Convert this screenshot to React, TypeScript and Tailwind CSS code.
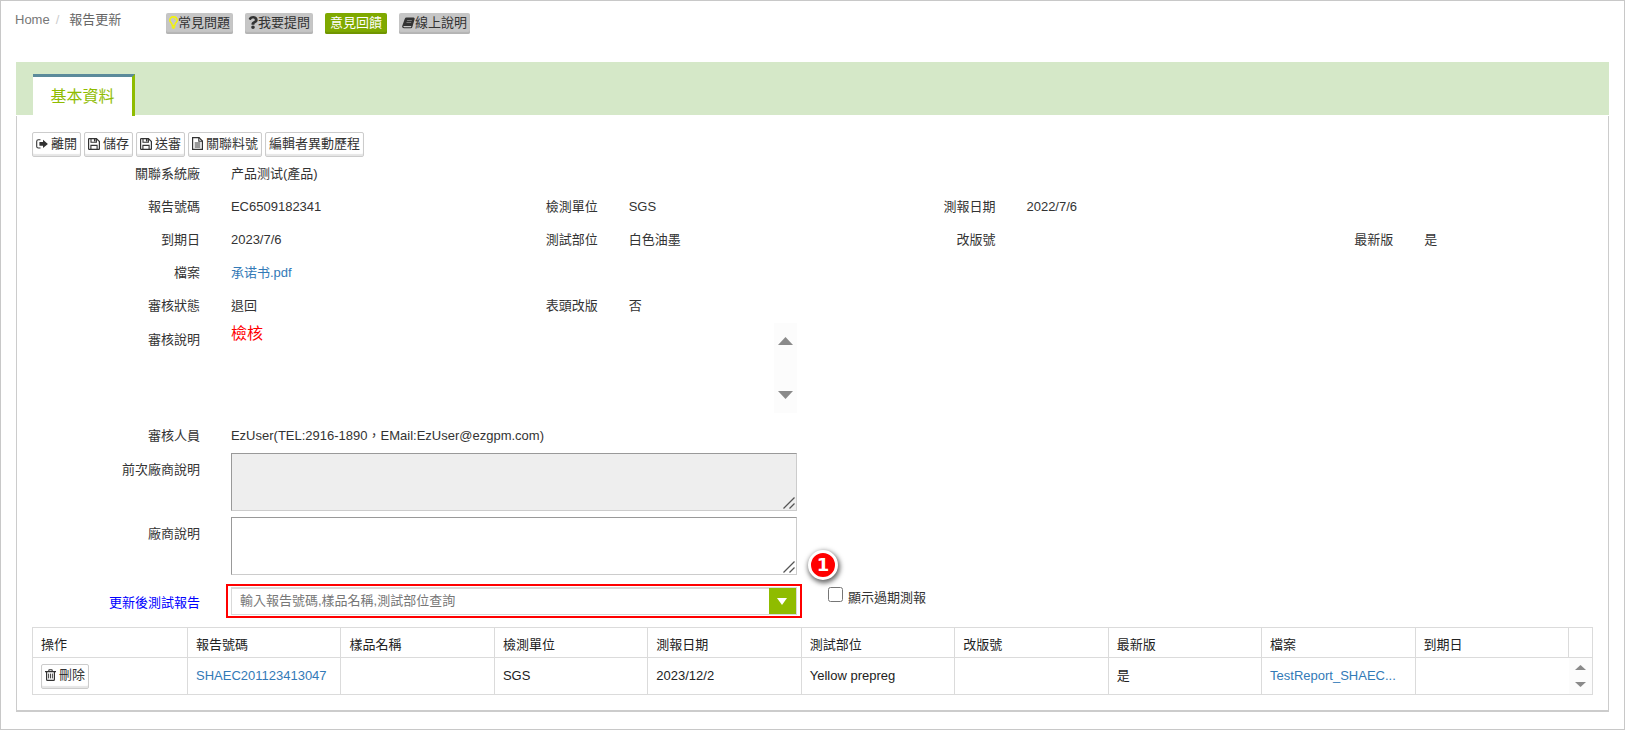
import type { ReactNode } from "react";
import { FaQuestion } from "react-icons/fa";

type FieldProps = {
  label: string;
  htmlFor?: string;
  className?: string;
  children?: ReactNode;
};

const columns = [
  "操作",
  "報告號碼",
  "樣品名稱",
  "檢測單位",
  "測報日期",
  "測試部位",
  "改版號",
  "最新版",
  "檔案",
  "到期日",
];

const helpButton =
  "flex h-[21px] items-center rounded-xs bg-[#c6c6c6] px-[3px] pb-[2px] text-[#333] shadow-[inset_0_-2px_1px_#b4b4b4]";

const toolButton =
  "flex h-[25px] items-center gap-[3px] rounded-xs border border-[#ccc] bg-white px-[3px] pb-[2px] text-[#333] shadow-[inset_0_-2px_1px_#e6e6e6]";

function SignOutIcon() {
  return (
    <svg width="12" height="12" viewBox="0 0 12 12" fill="none" aria-hidden="true">
      <path d="M4.5 1.8H2.4Q.7 1.8.7 3.4V8.4Q.7 10 2.4 10H4.5" stroke="currentColor" strokeWidth="1.1" />
      <path d="M3.4 4.100H7V1.700L11.900 5.900L7 10.100V7.700H3.400Z" fill="currentColor" />
    </svg>
  );
}

function SaveIcon() {
  return (
    <svg width="12" height="12" viewBox="0 0 12 12" fill="none" stroke="currentColor" aria-hidden="true">
      <path d="M.6 1.200Q.6.600 1.200.600H8.400L11.400 3.600V10.800Q11.400 11.400 10.800 11.400H1.200Q.6 11.400.6 10.800Z" strokeWidth="1.200" />
      <path d="M3 .6V4.300H8.400V.6M2.900 11.400V7.400H9.100V11.400" strokeWidth="1.100" />
      <path d="M6.700 1V3.500" strokeWidth="1.500" />
    </svg>
  );
}

function FileIcon() {
  return (
    <svg width="11" height="13" viewBox="0 0 11 13" fill="none" stroke="currentColor" aria-hidden="true">
      <path d="M.6.6H7L10.400 4V12.400H.6Z" strokeWidth="1.200" />
      <path d="M6.800.6V4.200H10.400" strokeWidth="1.100" />
      <path d="M2.700 6H8.300M2.700 8H8.300M2.700 10H8.300" />
    </svg>
  );
}

function TrashIcon() {
  return (
    <svg width="11" height="12" viewBox="0 0 11 12" fill="none" stroke="currentColor" aria-hidden="true">
      <path d="M0 2.600H11M3.600 2.400L4.100.700H6.900L7.400 2.400" strokeWidth="1.100" />
      <path d="M1.600 2.800V10.400Q1.600 11.400 2.500 11.400H8.500Q9.400 11.400 9.400 10.400V2.800" strokeWidth="1.200" />
      <path d="M3.600 4.600V9.400M5.500 4.600V9.400M7.400 4.600V9.400" strokeWidth=".9" />
    </svg>
  );
}

function BulbIcon() {
  return (
    <svg width="9" height="13" viewBox="0 0 9 13" fill="none" stroke="#f5f500" aria-hidden="true">
      <path d="M3 8.700Q3 7.500 1.800 6.400Q.8 5.500.8 4.200Q1 1 4.500.800Q8 1 8.200 4.200Q8.200 5.500 7.200 6.400Q6 7.500 6 8.700" strokeWidth="1.500" />
      <path d="M4.700 2.600Q6.200 2.800 6.200 4.200" strokeWidth=".8" />
      <path d="M2.600 9.400H6.400M2.600 10.900H6.400M3.500 12.200H5.500" strokeWidth="1.300" />
    </svg>
  );
}

function BookIcon() {
  return (
    <svg width="13" height="12" viewBox="0 0 13 12" aria-hidden="true">
      <path
        fillRule="evenodd"
        d="M4.500.600H11.600Q13 .900 12.600 2.200L10.400 9.800Q10 11.300 8.700 11.300H1.900Q-.2 11 .2 9L2.700 2Q3.200.600 4.500.600ZM5.200 3L5 3.600H9.700L9.900 3ZM4.600 4.900L4.400 5.500H9.100L9.300 4.900ZM1.500 9Q1.200 10.200 2.200 10.200H8.900L9.400 9Z"
        fill="currentColor"
      />
    </svg>
  );
}

function Triangle({ down = false, className = "" }: { down?: boolean; className?: string }) {
  return (
    <svg
      viewBox="0 0 16 8"
      preserveAspectRatio="none"
      className={className}
      fill="currentColor"
      aria-hidden="true"
    >
      <path d={down ? "M0 0H16L8 8Z" : "M0 8H16L8 0Z"} />
    </svg>
  );
}

function Field({ label, className = "", children }: FieldProps) {
  return (
    <div className={`flex ${className}`}>
      <span className="w-[46%] shrink-0 text-right">{label}</span>
      <div className="ml-[31px] min-w-0">{children}</div>
    </div>
  );
}

// Rows whose control runs across a good third of the panel
function WideField({ label, htmlFor, className = "", children }: FieldProps) {
  return (
    <div className={`flex ${className}`}>
      {htmlFor ? (
        <label htmlFor={htmlFor} className="w-[11.5%] shrink-0 pt-2 text-right">
          {label}
        </label>
      ) : (
        <span className="w-[11.5%] shrink-0 pt-2 text-right">{label}</span>
      )}
      <div className="ml-[31px] w-[566px]">{children}</div>
    </div>
  );
}

function NoteArea({ id, readOnly = false }: { id: string; readOnly?: boolean }) {
  return (
    <div className="relative">
      <textarea
        id={id}
        readOnly={readOnly}
        className="block h-[58px] w-full resize-none border border-t-[#999] border-r-[#ccc] border-b-[#ccc] border-l-[#999] bg-white p-1 read-only:bg-[#eee]"
      />
      <svg
        className="pointer-events-none absolute right-[2px] bottom-[2px]"
        width="12"
        height="12"
        viewBox="0 0 12 12"
        stroke="#555"
        strokeWidth="1.300"
        aria-hidden="true"
      >
        <path d="M.5 11.500L11.500.5M6.500 11.500L11.500 6.500" />
      </svg>
    </div>
  );
}

function Header() {
  return (
    <header className="flex items-start pt-[10px]">
      <nav className="flex w-[151px] text-[#666]">
        <a href="#" className="text-[#777]">
          Home
        </a>
        <span className="px-[6px] text-[#ccc]">/</span>
        <span className="pl-1">報告更新</span>
      </nav>
      <div className="flex gap-3 pt-[2px]">
        <button type="button" className={helpButton}>
          <BulbIcon />
          常見問題
        </button>
        <button type="button" className={helpButton}>
          <FaQuestion className="w-[10px]" />
          我要提問
        </button>
        <button
          type="button"
          className="flex h-[21px] items-center rounded-xs bg-[#7fa900] px-[5px] pb-[2px] text-white shadow-[inset_0_-2px_1px_#6f9400]"
        >
          意見回饋
        </button>
        <button type="button" className={helpButton}>
          <BookIcon />
          線上說明
        </button>
      </div>
    </header>
  );
}

function ReportTable() {
  return (
    <table className="mt-[9px] w-full table-fixed border-collapse border border-[#dbdbdb] text-left text-[#222]">
      <thead>
        <tr className="h-[30px]">
          {columns.map((column) => (
            <th
              key={column}
              className="border border-[#dbdbdb] px-2 pt-1 font-normal first:w-[155px]"
            >
              {column}
            </th>
          ))}
          <th className="w-6" aria-label="捲軸" />
        </tr>
      </thead>
      <tbody>
        <tr className="h-[37px] [&>td]:border [&>td]:border-[#dbdbdb] [&>td]:px-2">
          <td>
            <button type="button" className={toolButton}>
              <TrashIcon />
              刪除
            </button>
          </td>
          <td>
            <a href="#" className="text-[#337ab7]">
              SHAEC201123413047
            </a>
          </td>
          <td />
          <td>SGS</td>
          <td>2023/12/2</td>
          <td>Yellow prepreg</td>
          <td />
          <td>是</td>
          <td>
            <a href="#" className="text-[#337ab7]">
              TestReport_SHAEC...
            </a>
          </td>
          <td className="border-r-0!" />
          <td className="border-l-0! bg-[#fcfcfc] px-0!">
            <div className="flex flex-col items-center gap-3 text-[#8a8a8a]">
              <Triangle className="h-[5px] w-[11px]" />
              <Triangle down className="h-[5px] w-[11px]" />
            </div>
          </td>
        </tr>
      </tbody>
    </table>
  );
}

export default function App() {
  return (
    <div className="min-h-screen border border-[#c8c8c8] bg-white px-[15px] pb-[14px] font-['Liberation_Sans','Noto_Sans_CJK_TC',sans-serif] text-[13px] leading-[18px] text-[#333]">
      <div className="-ml-px h-[61px]">
        <Header />
      </div>

      <div className="flex h-[54px] items-end border-b border-white bg-[#d5e8c8] pl-[17px]">
        <button
          type="button"
          className="-mb-px h-[42px] w-[102px] border-t-3 border-r-3 border-t-[#5b8b9b] border-r-[#8fbc00] bg-white text-center text-[16px] text-[#8fbc00]"
        >
          基本資料
        </button>
      </div>

      <main className="border-x border-b-2 border-[#ccc] pb-[15px]">
        <div className="flex gap-[3px] px-[15px] pt-4">
          <button type="button" className={toolButton}>
            <SignOutIcon />
            離開
          </button>
          <button type="button" className={toolButton}>
            <SaveIcon />
            儲存
          </button>
          <button type="button" className={toolButton}>
            <SaveIcon />
            送審
          </button>
          <button type="button" className={toolButton}>
            <FileIcon />
            關聯料號
          </button>
          <button type="button" className={toolButton}>
            編輯者異動歷程
          </button>
        </div>

        <div className="mt-2 grid auto-rows-[33px] grid-cols-4">
          <Field label="關聯系統廠" className="col-end-2">
            产品测试(產品)
          </Field>
          <Field label="報告號碼" className="col-start-1">
            EC6509182341
          </Field>
          <Field label="檢測單位">SGS</Field>
          <Field label="測報日期">2022/7/6</Field>
          <Field label="到期日" className="col-start-1">
            2023/7/6
          </Field>
          <Field label="測試部位">白色油墨</Field>
          <Field label="改版號" />
          <Field label="最新版">是</Field>
          <Field label="檔案" className="col-start-1">
            <a href="#" className="text-[#337ab7]">
              承诺书.pdf
            </a>
          </Field>
          <Field label="審核狀態" className="col-start-1">
            退回
          </Field>
          <Field label="表頭改版">否</Field>
        </div>

        <WideField label="審核說明" className="-mt-[7px]">
          <div className="flex h-[90px] justify-between">
            <p className="pt-[2px] text-[16px] text-[#f00]">檢核</p>
            <div className="flex w-[23px] flex-col items-center justify-between bg-[#fcfcfc] py-[14px] text-[#8a8a8a]">
              <Triangle className="h-2 w-[15px]" />
              <Triangle down className="h-2 w-[15px]" />
            </div>
          </div>
        </WideField>

        <WideField label="審核人員" className="pt-[6px]">
          <p className="py-2">EzUser(TEL:2916-1890，EMail:EzUser@ezgpm.com)</p>
        </WideField>

        <WideField label="前次廠商說明" htmlFor="previous-note">
          <NoteArea id="previous-note" readOnly />
        </WideField>

        <WideField label="廠商說明" htmlFor="vendor-note" className="pt-[6px]">
          <NoteArea id="vendor-note" />
        </WideField>

        <div className="flex pt-[9px]">
          <label htmlFor="report-search" className="w-[11.5%] shrink-0 pt-[10px] text-right text-[#00f]">
            更新後測試報告
          </label>
          <div className="relative ml-[26px] flex h-[34px] w-[576px] border-2 border-[#f00] px-[3px] py-px">
            <div className="flex w-full border border-t-2 border-[#d9d9d9]">
              <input
                id="report-search"
                placeholder="輸入報告號碼,樣品名稱,測試部位查詢"
                className="min-w-0 flex-1 px-2 pb-[2px] outline-none placeholder:text-[#777]"
              />
              <button
                type="button"
                aria-label="展開"
                className="-mt-px flex w-[27px] items-center justify-center bg-[#8fbc00] text-white"
              >
                <Triangle down className="h-[7px] w-[10px]" />
              </button>
            </div>
            <span className="absolute -top-[36px] -right-[38px] flex size-[30px] items-center justify-center rounded-full border-3 border-white bg-[#f00] font-['DejaVu_Sans',sans-serif] text-[18px] font-bold text-white shadow-[1px_2px_5px_1px_rgba(0,0,0,0.6)]">
              1
            </span>
          </div>
          <div className="ml-[26px] flex items-start gap-[5px] pt-[3px]">
            <input id="show-expired" type="checkbox" className="size-[15px]" />
            <label htmlFor="show-expired" className="pt-[2px]">
              顯示過期測報
            </label>
          </div>
        </div>

        <div className="px-[15px]">
          <ReportTable />
        </div>
      </main>
    </div>
  );
}
